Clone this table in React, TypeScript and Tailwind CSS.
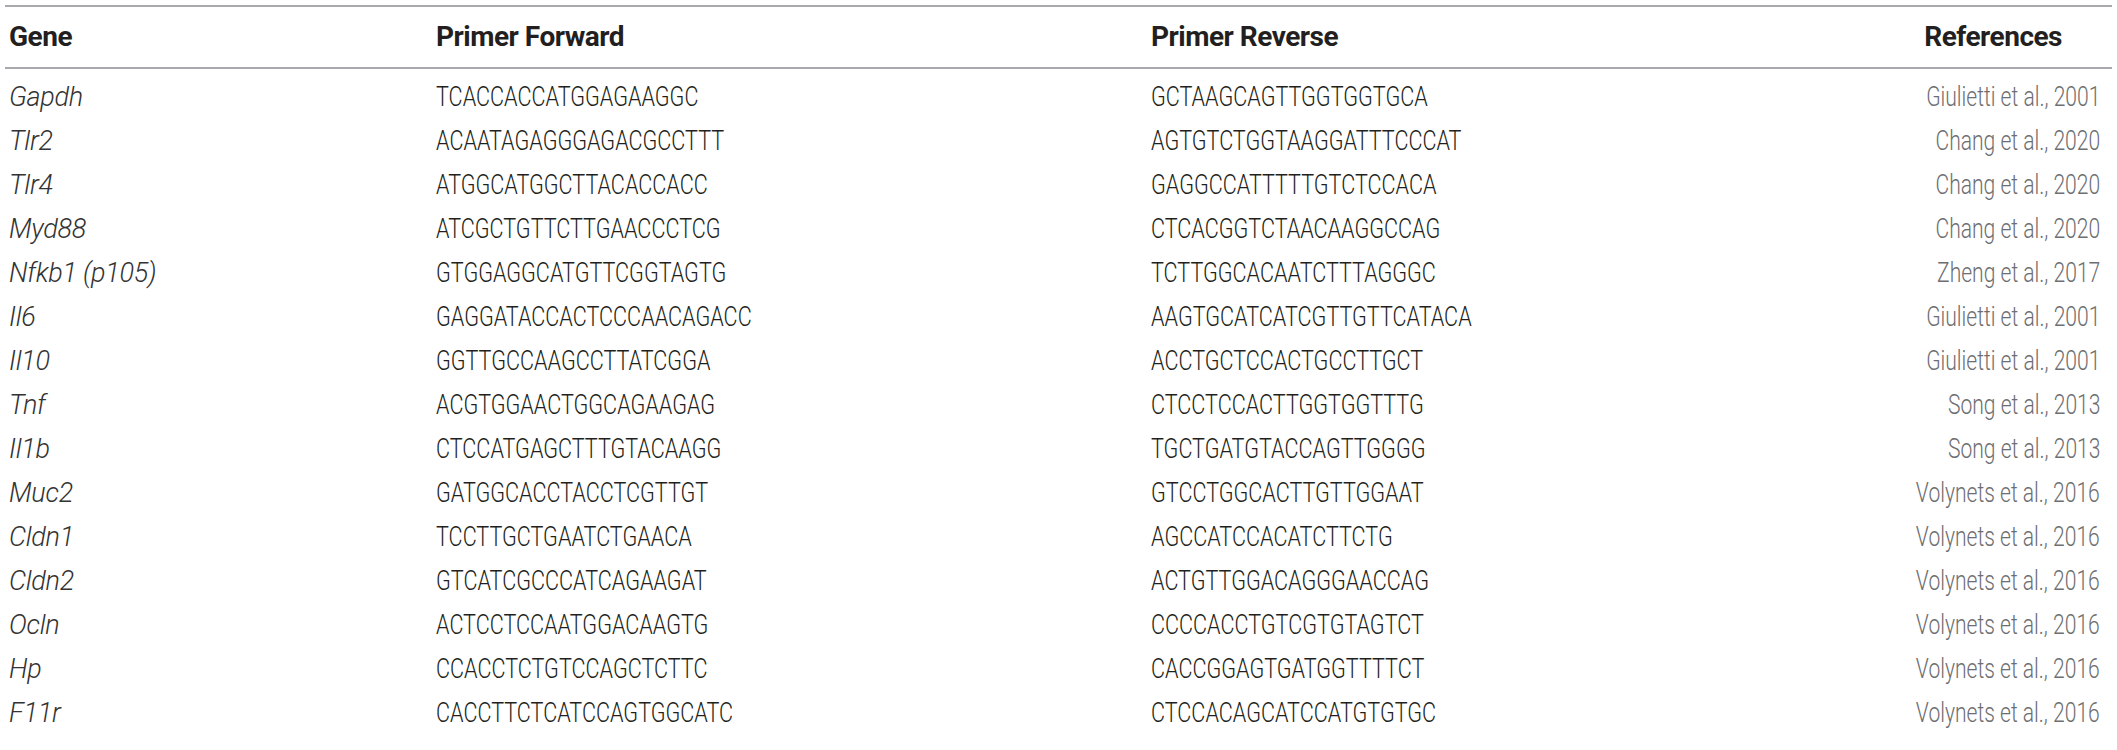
const rows: [string, string, string, string][] = [
  ['Gapdh', 'TCACCACCATGGAGAAGGC', 'GCTAAGCAGTTGGTGGTGCA', 'Giulietti et al., 2001'],
  ['Tlr2', 'ACAATAGAGGGAGACGCCTTT', 'AGTGTCTGGTAAGGATTTCCCAT', 'Chang et al., 2020'],
  ['Tlr4', 'ATGGCATGGCTTACACCACC', 'GAGGCCATTTTTGTCTCCACA', 'Chang et al., 2020'],
  ['Myd88', 'ATCGCTGTTCTTGAACCCTCG', 'CTCACGGTCTAACAAGGCCAG', 'Chang et al., 2020'],
  ['Nfkb1 (p105)', 'GTGGAGGCATGTTCGGTAGTG', 'TCTTGGCACAATCTTTAGGGC', 'Zheng et al., 2017'],
  ['Il6', 'GAGGATACCACTCCCAACAGACC', 'AAGTGCATCATCGTTGTTCATACA', 'Giulietti et al., 2001'],
  ['Il10', 'GGTTGCCAAGCCTTATCGGA', 'ACCTGCTCCACTGCCTTGCT', 'Giulietti et al., 2001'],
  ['Tnf', 'ACGTGGAACTGGCAGAAGAG', 'CTCCTCCACTTGGTGGTTTG', 'Song et al., 2013'],
  ['Il1b', 'CTCCATGAGCTTTGTACAAGG', 'TGCTGATGTACCAGTTGGGG', 'Song et al., 2013'],
  ['Muc2', 'GATGGCACCTACCTCGTTGT', 'GTCCTGGCACTTGTTGGAAT', 'Volynets et al., 2016'],
  ['Cldn1', 'TCCTTGCTGAATCTGAACA', 'AGCCATCCACATCTTCTG', 'Volynets et al., 2016'],
  ['Cldn2', 'GTCATCGCCCATCAGAAGAT', 'ACTGTTGGACAGGGAACCAG', 'Volynets et al., 2016'],
  ['Ocln', 'ACTCCTCCAATGGACAAGTG', 'CCCCACCTGTCGTGTAGTCT', 'Volynets et al., 2016'],
  ['Hp', 'CCACCTCTGTCCAGCTCTTC', 'CACCGGAGTGATGGTTTTCT', 'Volynets et al., 2016'],
  ['F11r', 'CACCTTCTCATCCAGTGGCATC', 'CTCCACAGCATCCATGTGTGC', 'Volynets et al., 2016'],
];

const grid = 'grid grid-cols-[427px_715px_1fr_auto] items-center pl-[4px] pr-[12px]';

export default function App() {
  return (
    <div className="w-[2117px] h-[750px] bg-white pt-[5px] font-['Roboto','Liberation_Sans',sans-serif] overflow-hidden">
      <div className="mx-[5px] border-t-2 border-[#a7a9ac]">
        {/* header */}
        <div className={`${grid} h-[62px] border-b-2 border-[#a7a9ac] text-[28px] font-bold text-[#231f20] tracking-[-0.5px]`}>
          <div>Gene</div>
          <div>Primer Forward</div>
          <div>Primer Reverse</div>
          <div className="text-right pr-[38px]">References</div>
        </div>

        <div className="pt-[6px]">
          {rows.map(([gene, fwd, rev, ref]) => (
            <div key={gene} className={`${grid} h-[44px] font-light leading-none text-[27px]`}>
              <div className="italic text-[#333333] tracking-[-0.3px]">{gene}</div>
              <div className="text-[#231f20]">
                <span className="inline-block origin-left scale-x-[0.8]">{fwd}</span>
              </div>
              <div className="text-[#231f20]">
                <span className="inline-block origin-left scale-x-[0.8]">{rev}</span>
              </div>
              <div className="text-right text-[#6d6e71]">
                <span className="inline-block origin-right scale-x-[0.78]">{ref}</span>
              </div>
            </div>
          ))}
        </div>
      </div>
    </div>
  );
}
